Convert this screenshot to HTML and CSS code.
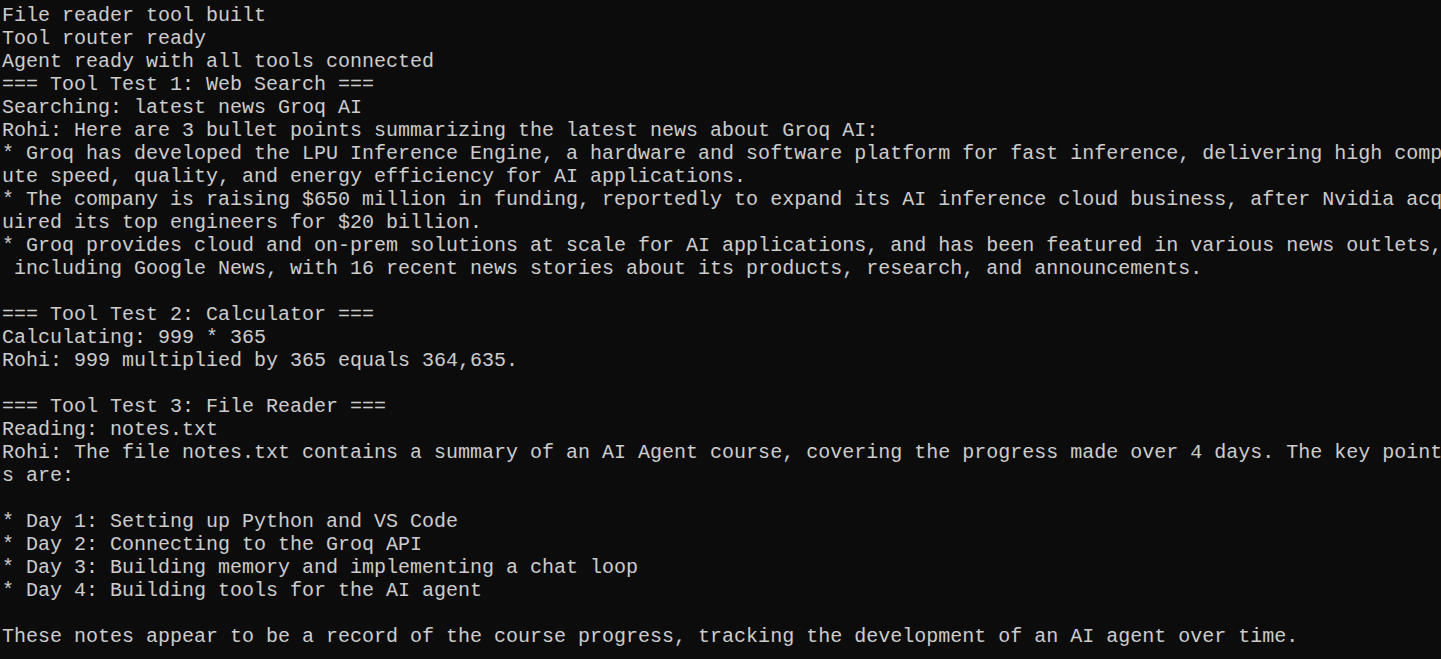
FILE: index.html
```html
<!DOCTYPE html>
<html>
<head>
<meta charset="utf-8">
<link rel="stylesheet" href="styles.css">
</head>
<body>
<pre class="terminal">File reader tool built
Tool router ready
Agent ready with all tools connected
=== Tool Test 1: Web Search ===
Searching: latest news Groq AI
Rohi: Here are 3 bullet points summarizing the latest news about Groq AI:
* Groq has developed the LPU Inference Engine, a hardware and software platform for fast inference, delivering high comp
ute speed, quality, and energy efficiency for AI applications.
* The company is raising $650 million in funding, reportedly to expand its AI inference cloud business, after Nvidia acq
uired its top engineers for $20 billion.
* Groq provides cloud and on-prem solutions at scale for AI applications, and has been featured in various news outlets,
 including Google News, with 16 recent news stories about its products, research, and announcements.

=== Tool Test 2: Calculator ===
Calculating: 999 * 365
Rohi: 999 multiplied by 365 equals 364,635.

=== Tool Test 3: File Reader ===
Reading: notes.txt
Rohi: The file notes.txt contains a summary of an AI Agent course, covering the progress made over 4 days. The key point
s are:

* Day 1: Setting up Python and VS Code
* Day 2: Connecting to the Groq API
* Day 3: Building memory and implementing a chat loop
* Day 4: Building tools for the AI agent

These notes appear to be a record of the course progress, tracking the development of an AI agent over time.</pre>
</body>
</html>
```
FILE: styles.css
```css
html, body {
  margin: 0;
  padding: 0;
  background: #0c0c0c;
  height: 100%;
  overflow: hidden;
}
.terminal {
  margin: 0;
  padding: 4px 0 0 2px;
  font-family: "Liberation Mono", "DejaVu Sans Mono", monospace;
  font-size: 20px;
  line-height: 23px;
  color: #cccccc;
  white-space: pre;
  overflow: hidden;
}
```
